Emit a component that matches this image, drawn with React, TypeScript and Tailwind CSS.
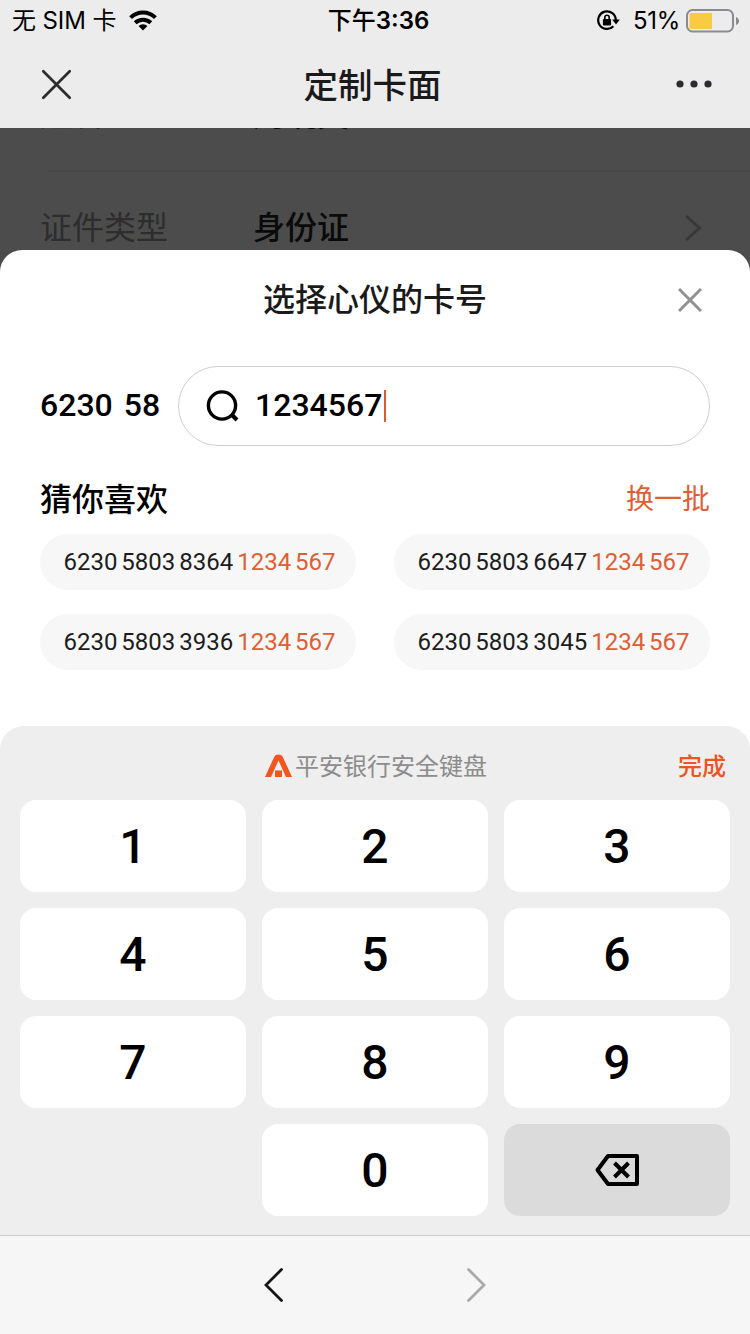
interface CardNumber {
  prefix: string;
  tail: string;
}

const cardNumbers: CardNumber[] = [
  { prefix: '6230 5803 8364', tail: '1234 567' },
  { prefix: '6230 5803 6647', tail: '1234 567' },
  { prefix: '6230 5803 3936', tail: '1234 567' },
  { prefix: '6230 5803 3045', tail: '1234 567' },
];

const digits = ['1', '2', '3', '4', '5', '6', '7', '8', '9'];

const StatusBar = () => (
  <div className="grid h-10 grid-cols-3 items-center pl-3 pr-[10px] pt-px font-[Inter,'Noto_Sans_CJK_SC',sans-serif] text-[24px] leading-[39px] text-black">
    <div className="flex items-center gap-[13px] whitespace-nowrap">
      <span className="tracking-[-0.1px]">无 SIM 卡</span>
      <svg width="28" height="21" viewBox="0 0 28 21" fill="none" stroke="#000" strokeWidth="4">
        <path d="M1.6 7.6a17.6 17.6 0 0 1 24.8 0" />
        <path d="M6.2 12.8a11.2 11.2 0 0 1 15.6 0" />
        <path d="M14 20.600l-4.400-4.500a6.300 6.300 0 0 1 8.800 0z" fill="#000" stroke="none" />
      </svg>
    </div>
    <div className="pl-[5px] text-center font-semibold">
      <span className="font-medium">下午</span>3:36
    </div>
    <div className="flex items-center justify-end">
      <svg className="mr-[13px]" width="24" height="22" viewBox="0 0 24 22" fill="none" stroke="#000" strokeWidth="2.200">
        <path d="M17.400 16.200A8.800 8.800 0 1 1 19.800 10.200" />
        <path d="M16.200 9.600h7.600l-3.800 4.800z" fill="#000" stroke="none" />
        <rect x="6.900" y="8.900" width="8.200" height="6.600" rx="1" fill="#000" stroke="none" />
        <path d="M8.800 9.500V7.500a2.200 2.200 0 0 1 4.400 0v2" strokeWidth="1.600" />
      </svg>
      <span className="mr-[6px] tracking-[-0.3px]">51%</span>
      <svg width="54" height="24" viewBox="0 0 54 24">
        <rect x="1" y="1" width="46" height="21.500" rx="5.500" fill="none" stroke="#8b8b8f" strokeWidth="2" />
        <path d="M5 4h21v16H5a1.500 1.500 0 0 1-1.500-1.500v-13A1.500 1.500 0 0 1 5 4z" fill="#f8cb42" />
        <path d="M50 8c2 .8 3 2.300 3 4s-1 3.200-3 4z" fill="#8b8b8f" />
      </svg>
    </div>
  </div>
);

const NavBar = () => (
  <div className="flex h-22 items-center justify-between pl-[41px] pr-[37px]">
    <svg width="31" height="31" viewBox="0 0 31 31" stroke="#2c2c2e" strokeWidth="2.700" strokeLinecap="round">
      <path d="M2.300 2.300l26.400 26.400M28.700 2.300L2.300 28.700" />
    </svg>
    <h1 className="pr-[3px] pt-[5px] text-[34.5px] font-medium leading-none text-[#1a1a1a]">定制卡面</h1>
    <svg width="37" height="8" viewBox="0 0 37 8" fill="#2c2c2e">
      <circle cx="4" cy="4" r="3.600" />
      <circle cx="18" cy="4" r="3.600" />
      <circle cx="32" cy="4" r="3.600" />
    </svg>
  </div>
);

// Form page dimmed behind the sheet, scrolled under the nav bar
const DimmedForm = () => (
  <div className="flex h-[144px] flex-col justify-start overflow-hidden bg-[#4c4c4c] text-[32px] leading-[44px]">
    <div className="-mt-[70px] flex h-28 shrink-0 items-center pl-10 pt-px">
      <span className="w-[213px] text-[#2d2d2d]">姓名</span>
      <span className="font-medium text-[#0a0a0a]">周晓英</span>
    </div>
    <div className="ml-12 h-[2px] shrink-0 bg-[#464646]" />
    <div className="flex h-[112px] shrink-0 items-center pl-10 pr-[48px]">
      <span className="w-[213px] text-[#2d2d2d]">证件类型</span>
      <span className="flex-1 font-medium text-[#0a0a0a]">身份证</span>
      <svg width="18" height="28" viewBox="0 0 18 28" fill="none" stroke="#393939" strokeWidth="3">
        <path d="M2 2l13.500 12L2 26" />
      </svg>
    </div>
  </div>
);

const NumberChip = ({ prefix, tail }: CardNumber) => (
  <button className="h-14 rounded-full bg-[#f7f7f7] pl-[3px] text-center text-2xl leading-14 text-[#1c1c1c] [word-spacing:-2px]">
    {prefix} <span className="text-[#de5e36]">{tail}</span>
  </button>
);

const KeyButton = ({ label }: { label: string }) => (
  <button className="h-23 rounded-2xl bg-white pt-[2px] text-5xl font-medium text-black">{label}</button>
);

const Keyboard = () => (
  <div className="h-[509px] rounded-t-3xl bg-[#eeeeee] px-5">
    <div className="grid h-[74px] grid-cols-3 items-center pt-[7px] text-2xl leading-none">
      <div className="col-start-2 flex items-center justify-center gap-[3px] whitespace-nowrap pl-[2px] text-[#8c8c8c]">
        <svg className="-mt-[2px] shrink-0" width="27" height="24" viewBox="0 0 27 24" fill="#f0561d">
          <path d="M0 23L9.300 2.700Q10.400.5 13.500.5t4.200 2.200L27 23h-6L13.500 6.500 6 23z" />
          <rect x="10" y="16.500" width="7" height="6.500" />
        </svg>
        <span>平安银行安全键盘</span>
      </div>
      <button className="pr-1 text-right font-medium text-[#ea5520]">完成</button>
    </div>
    <div className="grid grid-cols-3 gap-4">
      {digits.map((digit) => (
        <KeyButton key={digit} label={digit} />
      ))}
      <div />
      <KeyButton label="0" />
      <button className="flex h-23 items-center justify-center rounded-2xl bg-[#dbdbdb]">
        <svg width="44" height="32" viewBox="0 0 44 32" fill="none" stroke="#000" strokeWidth="4">
          <path d="M13 2h29v28H13L2.500 16z" strokeLinejoin="round" />
          <path d="M19.500 9l14 14M33.500 9l-14 14" />
        </svg>
      </button>
    </div>
  </div>
);

const CardNumberSheet = () => (
  <div className="relative -mt-[22px] rounded-t-[22px] bg-white">
    <div className="flex h-[116px] items-start justify-between px-12 pt-[28px]">
      <h2 className="flex-1 pl-[24px] text-center text-[32px] font-medium leading-[44px] text-[#1a1a1a]">选择心仪的卡号</h2>
      <svg className="mt-[10px]" width="24" height="24" viewBox="0 0 24 24" stroke="#929292" strokeWidth="3">
        <path d="M1 1l22 22M23 1L1 23" />
      </svg>
    </div>

    <div className="flex items-center px-10 text-[32px] font-medium text-black">
      <span className="w-[138px] whitespace-nowrap pb-[2px] [word-spacing:3px]">6230 58</span>
      <div className="flex h-20 flex-1 items-center rounded-full border border-[#cfcfcf] pl-[27px]">
        <svg width="34" height="34" viewBox="0 0 34 34" fill="none" stroke="#000" strokeWidth="3.400">
          <circle cx="16" cy="16.500" r="13.600" />
          <path d="M25.500 25.500l5.500 5.500" strokeWidth="4" />
        </svg>
        <span className="ml-[15px] pb-[2px]">1234567</span>
        <span className="ml-[2px] h-8 w-[2px] bg-[#dc5a2b]" />
      </div>
    </div>

    <div className="flex h-[88px] items-center justify-between px-10 pt-[20px]">
      <h3 className="text-[32px] font-medium leading-none text-black">猜你喜欢</h3>
      <button className="text-[28px] leading-none text-[#de5e36]">换一批</button>
    </div>

    <div className="grid grid-cols-2 gap-x-[38px] gap-y-6 px-10 pb-14">
      {cardNumbers.map((card) => (
        <NumberChip key={card.prefix} {...card} />
      ))}
    </div>

    <Keyboard />
  </div>
);

const BrowserBar = () => (
  <div className="flex h-[99px] items-center justify-center gap-[180px] border-t border-[#cdcdcd] bg-[#f6f6f6]">
    <svg width="22" height="36" viewBox="0 0 22 36" fill="none" stroke="#161616" strokeWidth="2.800" strokeLinecap="round">
      <path d="M18.500 2.500L3 18l15.500 15.500" />
    </svg>
    <svg width="22" height="36" viewBox="0 0 22 36" fill="none" stroke="#a9a9a9" strokeWidth="2.800" strokeLinecap="round">
      <path d="M3.500 2.500L19 18 3.500 33.500" />
    </svg>
  </div>
);

const App = () => {
  return (
    <div className="h-[1334px] w-[750px] overflow-hidden bg-white font-[Roboto,'Noto_Sans_CJK_SC',sans-serif]">
      <div className="bg-[#ececec]">
        <StatusBar />
        <NavBar />
      </div>
      <DimmedForm />
      <CardNumberSheet />
      <BrowserBar />
    </div>
  );
};

export default App;
